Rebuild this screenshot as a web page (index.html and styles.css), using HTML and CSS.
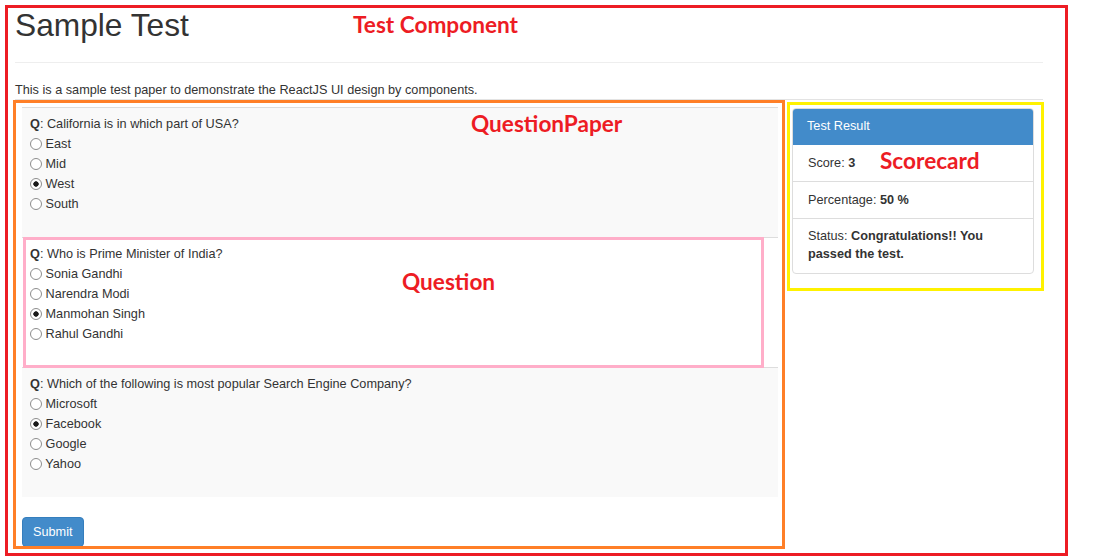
FILE: index.html
```html
<!DOCTYPE html>
<html lang="en">
<head>
<meta charset="utf-8">
<title>Sample Test</title>
<link rel="stylesheet" href="styles.css">
</head>
<body>
<div class="page">
  <div class="test">
    <div class="page-header">
      <h1 class="title">Sample Test</h1>
    </div>
    <p class="intro">This is a sample test paper to demonstrate the ReactJS UI design by components.</p>
    <div class="row">
      <div class="paper">
        <div class="question">
          <div class="q-text"><b>Q</b>: California is in which part of USA?</div>
          <label class="opt"><input type="radio" name="q1"> East</label>
          <label class="opt"><input type="radio" name="q1"> Mid</label>
          <label class="opt"><input type="radio" name="q1" checked> West</label>
          <label class="opt"><input type="radio" name="q1"> South</label>
        </div>
        <div class="question question-alt">
          <div class="q-text"><b>Q</b>: Who is Prime Minister of India?</div>
          <label class="opt"><input type="radio" name="q2"> Sonia Gandhi</label>
          <label class="opt"><input type="radio" name="q2"> Narendra Modi</label>
          <label class="opt"><input type="radio" name="q2" checked> Manmohan Singh</label>
          <label class="opt"><input type="radio" name="q2"> Rahul Gandhi</label>
        </div>
        <div class="question">
          <div class="q-text"><b>Q</b>: Which of the following is most popular Search Engine Company?</div>
          <label class="opt"><input type="radio" name="q3"> Microsoft</label>
          <label class="opt"><input type="radio" name="q3" checked> Facebook</label>
          <label class="opt"><input type="radio" name="q3"> Google</label>
          <label class="opt"><input type="radio" name="q3"> Yahoo</label>
        </div>
        <button class="btn-submit" type="button">Submit</button>
      </div>
      <div class="scorecard">
        <div class="panel-heading">Test Result</div>
        <div class="panel-item">Score: <b>3</b></div>
        <div class="panel-item">Percentage: <b>50 %</b></div>
        <div class="panel-item panel-item-tall">Status: <b>Congratulations!! You</b><br><b>passed the test.</b></div>
      </div>
    </div>
  </div>

  <div class="frame frame-red"></div>
  <div class="frame frame-orange"></div>
  <div class="frame frame-pink"></div>
  <div class="frame frame-yellow"></div>
  <div class="note note-test">Test Component</div>
  <div class="note note-paper">QuestionPaper</div>
  <div class="note note-question">Question</div>
  <div class="note note-score">Scorecard</div>
</div>
</body>
</html>
```

FILE: styles.css
```css
html, body {
  margin: 0;
  padding: 0;
  background: #fff;
}

body {
  font-family: "Liberation Sans", Arial, sans-serif;
  font-size: 12.7px;
  color: #333;
}

.page {
  position: relative;
  width: 1096px;
  height: 559px;
  overflow: hidden;
}

.test {
  width: 1028px;
  margin-left: 15px;
}

.page-header {
  padding-top: 7px;
  padding-bottom: 19px;
  border-bottom: 1px solid #eee;
}

.title {
  margin: 0;
  font-size: 31.7px;
  line-height: 36px;
  font-weight: 400;
  color: #333;
}

.intro {
  margin: 18px 0 0;
  line-height: 18px;
  border-bottom: 1px solid #e3e3e3;
}

.row {
  display: flex;
  align-items: flex-start;
  padding-left: 7px;
}

.paper {
  width: 756px;
  margin-top: 7px;
}

.question {
  border-top: 1px solid #ddd;
  background: #f9f9f9;
  padding: 7px 8px 23px;
  line-height: 20px;
}

.question-alt {
  background: #fff;
}

.q-text {
  line-height: 19px;
}

.q-text b {
  font-weight: 700;
}

.opt {
  display: flex;
  align-items: center;
  height: 20px;
  white-space: pre;
}

.opt input {
  appearance: none;
  -webkit-appearance: none;
  box-sizing: border-box;
  width: 12px;
  height: 12px;
  margin: 0 0 1px 0;
  border: 1px solid #8d8d8d;
  border-radius: 50%;
  background: #fff;
  flex: none;
}

.opt input:checked {
  background: radial-gradient(circle, #1a1a1a 0, #1a1a1a 2.4px, #fff 3px);
}

.btn-submit {
  display: block;
  margin-top: 20px;
  padding: 6px 10px;
  height: 30px;
  border: 1px solid #357ebd;
  border-radius: 4px;
  background: #428bca;
  color: #fff;
  font-family: "Liberation Sans", Arial, sans-serif;
  font-size: 12.7px;
  line-height: 16px;
}

.scorecard {
  width: 242px;
  box-sizing: border-box;
  margin-top: 8px;
  margin-left: 14px;
  border: 1px solid #ddd;
  border-radius: 4px;
  overflow: hidden;
}

.panel-heading {
  background: #428bca;
  color: #fff;
  height: 37px;
  line-height: 37px;
  padding: 0 15px;
  margin: -1px -1px 0;
}

.panel-item {
  padding: 10px 15px;
  line-height: 16px;
}

.panel-item + .panel-item {
  border-top: 1px solid #ddd;
}

.panel-item-tall {
  line-height: 18px;
  padding-top: 8px;
  padding-bottom: 10px;
}

/* annotation overlays */
.frame {
  position: absolute;
  box-sizing: border-box;
  border: 3px solid;
}

.frame-red {
  left: 5px;
  top: 5px;
  width: 1063px;
  height: 551px;
  border-color: #ed1c24;
}

.frame-orange {
  left: 13px;
  top: 100px;
  width: 772px;
  height: 449px;
  border-color: #ff7f27;
}

.frame-pink {
  left: 23px;
  top: 237px;
  width: 741px;
  height: 131px;
  border-color: #ffaec9;
}

.frame-yellow {
  left: 787px;
  top: 102px;
  width: 257px;
  height: 189px;
  border-color: #fff200;
}

.note {
  position: absolute;
  font-family: Lato, "Open Sans", sans-serif;
  font-weight: 700;
  font-size: 22.6px;
  line-height: 24px;
  color: #ed1c24;
  white-space: nowrap;
}

.note-test { left: 353px; top: 13px; }
.note-paper { left: 471px; top: 112px; }
.note-question { left: 402px; top: 270px; }
.note-score { left: 880px; top: 149px; }
```
